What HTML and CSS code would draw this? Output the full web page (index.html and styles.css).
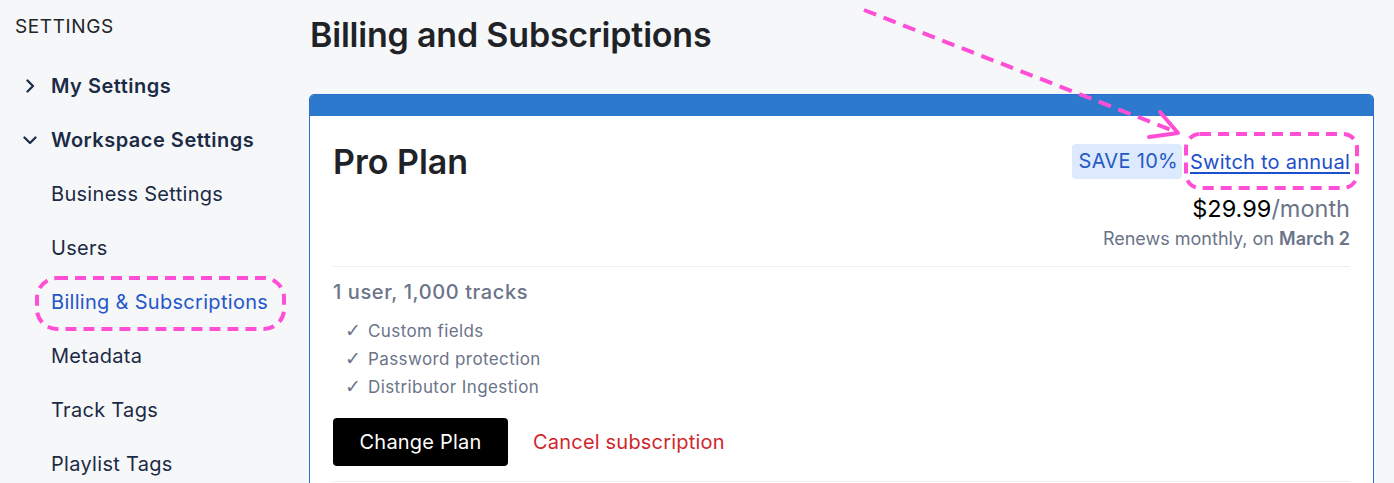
FILE: index.html
```html
<!DOCTYPE html>
<html>
<head>
<meta charset="utf-8">
<link rel="stylesheet" href="styles.css">
</head>
<body>
<div class="app">
  <aside class="sidebar">
    <div class="sidebar-title">SETTINGS</div>
    <nav class="nav">
      <div class="nav-group">
        <svg class="chev" width="14" height="14" viewBox="0 0 14 14"><path d="M4.5 1.5 L10 7 L4.5 12.5" fill="none" stroke="#1c2e4a" stroke-width="2.3" stroke-linecap="round" stroke-linejoin="round"/></svg>
        <span>My Settings</span>
      </div>
      <div class="nav-group">
        <svg class="chev" width="14" height="14" viewBox="0 0 14 14"><path d="M1.5 4.5 L7 10 L12.5 4.5" fill="none" stroke="#1c2e4a" stroke-width="2.3" stroke-linecap="round" stroke-linejoin="round"/></svg>
        <span>Workspace Settings</span>
      </div>
      <div class="nav-item">Business Settings</div>
      <div class="nav-item">Users</div>
      <div class="nav-item active">Billing &amp; Subscriptions</div>
      <div class="nav-item">Metadata</div>
      <div class="nav-item">Track Tags</div>
      <div class="nav-item">Playlist Tags</div>
    </nav>
  </aside>
  <main class="main">
    <h1 class="page-title">Billing and Subscriptions</h1>
    <section class="card">
      <div class="card-bar"></div>
      <div class="card-body">
        <div class="plan-head">
          <h2 class="plan-name">Pro Plan</h2>
          <div class="plan-price">
            <div class="switch-row">
              <span class="badge">SAVE 10%</span>
              <a class="switch-link" href="#">Switch to annual</a>
            </div>
            <div class="price"><span class="amount">$29.99</span><span class="per">/month</span></div>
            <div class="renews">Renews monthly, on <b>March 2</b></div>
          </div>
        </div>
        <div class="divider"></div>
        <div class="plan-summary">1 user, 1,000 tracks</div>
        <ul class="features">
          <li><span class="check">✓</span>Custom fields</li>
          <li><span class="check">✓</span>Password protection</li>
          <li><span class="check">✓</span>Distributor Ingestion</li>
        </ul>
        <div class="actions">
          <button class="btn-primary">Change Plan</button>
          <a class="cancel-link" href="#">Cancel subscription</a>
        </div>
        <div class="divider"></div>
      </div>
    </section>
  </main>
</div>
<svg class="annotations" width="1394" height="483" viewBox="0 0 1394 483">
  <g fill="none" stroke="#ff4fd6" stroke-width="4" stroke-linecap="butt">
    <rect x="37" y="278" width="247" height="51" rx="20" stroke-dasharray="11 7"/>
    <rect x="1186" y="134" width="171" height="54" rx="14" stroke-dasharray="11 7"/>
    <line x1="864" y1="10" x2="1174" y2="131" stroke-dasharray="13 8"/>
    <path d="M1160 112 L1178 133 L1149 137" stroke-linejoin="round" stroke-linecap="round"/>
  </g>
</svg>
</body>
</html>
```
FILE: styles.css
```css
* { box-sizing: border-box; }
html, body { margin: 0; padding: 0; }
body {
  background: #f6f7f9;
  font-family: Inter, "Noto Sans", "Liberation Sans", sans-serif;
  width: 1394px;
  height: 483px;
  overflow: hidden;
  position: relative;
}
.app { display: flex; }
.sidebar {
  width: 309px;
  flex: 0 0 309px;
  padding: 15px 0 0 15px;
}
.sidebar-title {
  font-size: 19px;
  color: #222427;
  letter-spacing: 0.6px;
  line-height: 24px;
}
.nav { display: flex; flex-direction: column; margin-top: 20px; }
.nav-group, .nav-item {
  height: 54px;
  display: flex;
  align-items: center;
  font-size: 20px;
  color: #1c2b45;
  letter-spacing: 0.3px;
}
.nav-group { font-weight: 600; gap: 14px; padding-left: 8px; letter-spacing: 0.5px; }
.chev { flex: 0 0 14px; }
.nav-item { padding-left: 36px; }
.nav-item.active { color: #2556c9; }
.main { flex: 1; padding-right: 20px; }
.page-title {
  margin: 15px 0 0 1px;
  font-size: 34px;
  font-weight: 600;
  color: #1f2328;
  line-height: 40px;
  letter-spacing: -0.2px;
}
.card {
  margin-top: 39px;
  border: 1px solid #2a6fd0;
  border-radius: 5px 5px 0 0;
  background: #fff;
  overflow: hidden;
}
.card-bar { height: 21px; background: #2c79cd; }
.card-body { padding: 28px 23px 40px 23px; }
.plan-head { display: flex; justify-content: space-between; align-items: flex-start; }
.plan-name {
  margin: 0;
  font-size: 34px;
  font-weight: 600;
  color: #1f2328;
  line-height: 36px;
  letter-spacing: 0;
}
.plan-price { display: flex; flex-direction: column; align-items: flex-end; }
.switch-row { display: flex; align-items: center; gap: 8px; }
.badge {
  background: #dde9fc;
  color: #2559c6;
  font-size: 20px;
  line-height: 35px;
  padding: 0 4px 0 7px;
  border-radius: 4px;
  letter-spacing: 0.3px;
}
.switch-link {
  color: #1c4fcc;
  font-size: 20px;
  letter-spacing: 0.25px;
  text-decoration: underline;
  text-underline-offset: 3px;
  text-decoration-thickness: 1.5px;
}
.price { margin-top: 15px; font-size: 23.5px; line-height: 30px; }
.amount { color: #000; }
.per { color: #6b7488; }
.renews { font-size: 18px; color: #6b7488; line-height: 22px; margin-top: 4px; }
.renews b { font-weight: 600; }
.divider { height: 1px; background: #eceef0; }
.plan-head + .divider { margin-top: 16px; }
.plan-summary {
  margin-top: 12px;
  font-size: 20px;
  font-weight: 500;
  color: #6b7488;
  line-height: 26px;
  letter-spacing: 0.6px;
}
.features {
  list-style: none;
  margin: 12px 0 0 0;
  padding: 0 0 0 12px;
  font-size: 17px;
  color: #6b7488;
  line-height: 27px;
  letter-spacing: 0.4px;
}
.check { display: inline-block; width: 23px; font-size: 19px; font-family: "DejaVu Sans", sans-serif; }
.actions { display: flex; align-items: center; gap: 25px; margin-top: 17px; }
.btn-primary {
  background: #000;
  color: #fff;
  border: none;
  border-radius: 4px;
  font-family: inherit;
  font-size: 20px;
  letter-spacing: 0.2px;
  width: 175px;
  height: 48px;
}
.cancel-link { color: #d0262d; font-size: 20px; text-decoration: none; letter-spacing: 0.2px; }
.actions + .divider { margin-top: 15px; }
.annotations { position: absolute; left: 0; top: 0; pointer-events: none; }
```
